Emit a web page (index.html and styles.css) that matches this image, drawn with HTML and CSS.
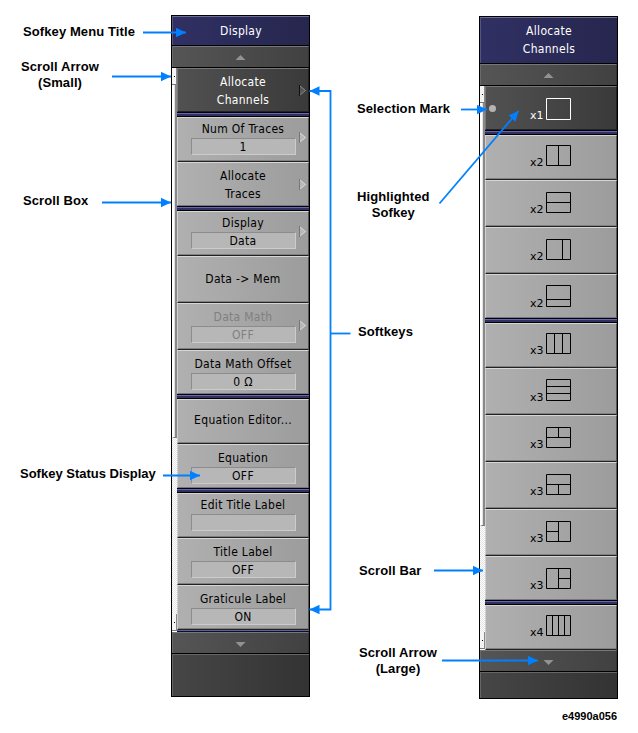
FILE: index.html
```html
<!DOCTYPE html>
<html lang="en">
<head>
  <meta charset="UTF-8">
  <meta name="viewport" content="width=device-width, initial-scale=1.0">
  <title>Softkey Menu</title>
  <link rel="stylesheet" href="styles.css">
</head>
<body>
  <div class="figure">
    <div class="labels labels-left">
      <p class="label menu-title">Sofkey Menu Title</p>
      <p class="label arrow-small">Scroll Arrow<br>(Small)</p>
      <p class="label scroll-box">Scroll Box</p>
      <p class="label status-display">Sofkey Status Display</p>
    </div>

    <!-- Display menu -->
    <div class="menu menu-display">
      <div class="title">Display</div>
      <div class="scroll"><span class="tri up"></span></div>
      <div class="content">
        <div class="bar">
          <div class="small"></div>
          <div class="thumb"></div>
          <div class="track"></div>
          <div class="small last"></div>
        </div>
        <div class="keys">
          <div class="key before dark"><span>Allocate</span><span>Channels</span><svg class="sub" width="8" height="11"><path class="fill" d="M1 1L6.5 5.5L1 10Z"/><path class="hi" d="M1 1L6.5 5.5L1 10"/><path class="lo" d="M0.5 0V11"/></svg></div>
          <div class="sep"></div>
          <div class="key after"><span>Num Of Traces</span><span class="value">1</span><svg class="sub" width="8" height="11"><path class="fill" d="M1 1L6.5 5.5L1 10Z"/><path class="hi" d="M1 1L6.5 5.5L1 10"/><path class="lo" d="M0.5 0V11"/></svg></div>
          <div class="key before"><span>Allocate</span><span>Traces</span><svg class="sub" width="8" height="11"><path class="fill" d="M1 1L6.5 5.5L1 10Z"/><path class="hi" d="M1 1L6.5 5.5L1 10"/><path class="lo" d="M0.5 0V11"/></svg></div>
          <div class="sep"></div>
          <div class="key after"><span>Display</span><span class="value">Data</span><svg class="sub" width="8" height="11"><path class="fill" d="M1 1L6.5 5.5L1 10Z"/><path class="hi" d="M1 1L6.5 5.5L1 10"/><path class="lo" d="M0.5 0V11"/></svg></div>
          <div class="key single"><span>Data -&gt; Mem</span></div>
          <div class="key disabled"><span>Data Math</span><span class="value">OFF</span><svg class="sub" width="8" height="11"><path class="fill" d="M1 1L6.5 5.5L1 10Z"/><path class="hi" d="M1 1L6.5 5.5L1 10"/><path class="lo" d="M0.5 0V11"/></svg></div>
          <div class="key before"><span>Data Math Offset</span><span class="value">0 Ω</span></div>
          <div class="sep"></div>
          <div class="key after single"><span>Equation Editor...</span></div>
          <div class="key before"><span>Equation</span><span class="value">OFF</span></div>
          <div class="sep"></div>
          <div class="key after"><span>Edit Title Label</span><span class="value"></span></div>
          <div class="key"><span>Title Label</span><span class="value">OFF</span></div>
          <div class="key end"><span>Graticule Label</span><span class="value">ON</span></div>
          <div class="end-line"></div>
        </div>
      </div>
      <div class="scroll"><span class="tri down"></span></div>
      <div class="footer"></div>
    </div>

    <div class="labels labels-mid">
      <p class="label selection">Selection Mark</p>
      <p class="label highlighted">Highlighted<br>Sofkey</p>
      <p class="label softkeys">Softkeys</p>
      <p class="label scroll-bar">Scroll Bar</p>
      <p class="label arrow-large">Scroll Arrow<br>(Large)</p>
    </div>

    <!-- Allocate Channels menu -->
    <div class="side">
      <div class="menu menu-channels">
        <div class="title">Allocate<br>Channels</div>
        <div class="scroll"><span class="tri up"></span></div>
        <div class="content">
          <div class="bar">
            <div class="small"></div>
            <div class="thumb"></div>
            <div class="track"></div>
            <div class="small last"></div>
          </div>
          <div class="keys">
            <div class="key layout before dark"><i class="mark"></i><b>x1</b><svg width="25" height="22"><path d="M.5 .5H24.5V21.5H.5Z"/></svg></div>
            <div class="sep"></div>
            <div class="key layout after"><b>x2</b><svg width="25" height="22"><path d="M.5 .5H24.5V20.5H.5ZM12.5 0V20"/></svg></div>
            <div class="key layout"><b>x2</b><svg width="25" height="22"><path d="M.5 .5H24.5V20.5H.5ZM0 10.5H24"/></svg></div>
            <div class="key layout"><b>x2</b><svg width="25" height="22"><path d="M.5 .5H24.5V20.5H.5ZM16.5 0V20"/></svg></div>
            <div class="key layout tall before"><b>x2</b><svg width="25" height="22"><path d="M.5 .5H24.5V21.5H.5ZM0 14.5H24"/></svg></div>
            <div class="sep"></div>
            <div class="key layout after"><b>x3</b><svg width="25" height="22"><path d="M.5 .5H24.5V20.5H.5ZM8.5 0V20M16.5 0V20"/></svg></div>
            <div class="key layout tall"><b>x3</b><svg width="25" height="22"><path d="M.5 .5H24.5V21.5H.5ZM0 7.5H24M0 14.5H24"/></svg></div>
            <div class="key layout"><b>x3</b><svg width="25" height="22"><path d="M.5 .5H24.5V20.5H.5ZM0 10.5H24M12.5 0V10"/></svg></div>
            <div class="key layout"><b>x3</b><svg width="25" height="22"><path d="M.5 .5H24.5V20.5H.5ZM0 10.5H24M12.5 10V20"/></svg></div>
            <div class="key layout"><b>x3</b><svg width="25" height="22"><path d="M.5 .5H24.5V20.5H.5ZM12.5 0V20M0 10.5H12"/></svg></div>
            <div class="key layout before"><b>x3</b><svg width="25" height="22"><path d="M.5 .5H24.5V20.5H.5ZM12.5 0V20M12 10.5H24"/></svg></div>
            <div class="sep"></div>
            <div class="key layout after"><b>x4</b><svg width="25" height="22"><path d="M.5 .5H24.5V20.5H.5ZM6.5 0V20M12.5 0V20M18.5 0V20"/></svg></div>
          </div>
        </div>
        <div class="scroll"><span class="tri down"></span></div>
        <div class="footer"></div>
      </div>
      <p class="figure-id">e4990a056</p>
    </div>

    <!-- Callout arrows, drawn over the menus -->
    <svg class="callouts" width="638" height="733" viewBox="0 0 638 733">
      <defs>
        <marker id="head" markerUnits="userSpaceOnUse" markerWidth="11" markerHeight="10" refX="10" refY="5" orient="auto-start-reverse">
          <path d="M0 .3L10 5L0 9.7Z"/>
        </marker>
      </defs>
      <path class="line" marker-end="url(#head)" d="M143 32.5H186"/>
      <path class="line" marker-end="url(#head)" d="M112 76.5H171"/>
      <path class="line" marker-end="url(#head)" d="M102 202.5H171"/>
      <path class="line" marker-end="url(#head)" d="M163 475.5H200"/>
      <path class="line" marker-start="url(#head)" marker-end="url(#head)" d="M309.5 91H330.5V609.5H309.5"/>
      <path class="line" d="M330.5 333.5H350.5"/>
      <path class="line" marker-end="url(#head)" d="M461 109.5H487"/>
      <path class="line" marker-end="url(#head)" d="M439.500 203.500L518.500 111"/>
      <path class="line" marker-end="url(#head)" d="M434 570.5H483"/>
      <path class="line" marker-end="url(#head)" d="M442 660.5H538"/>
    </svg>
  </div>
</body>
</html>
```

FILE: styles.css
```css
* {
  box-sizing: border-box;
}
body {
  margin: 0;
  background-color: #fff;
  overflow: hidden;
}
p {
  margin: 0;
}
.figure {
  position: relative;
  display: grid;
  grid-template-columns: 171px 139px 169px 159px;
  width: 638px;
  height: 733px;
}

/* Labels */
.label {
  width: max-content;
  font: bold 13px/16px "Liberation Sans", Arial, sans-serif;
  letter-spacing: 0.1px;
  color: #000;
  text-align: center;
}
.menu-title { margin: 24px 0 0 23px; }
.arrow-small { margin: 19px 0 0 21px; }
.scroll-box { margin: 102px 0 0 23px; }
.status-display { margin: 257px 0 0 20px; letter-spacing: 0; }
.selection { margin: 101px 0 0 47px; }
.highlighted { margin: 72px 0 0 47px; }
.softkeys { margin: 103px 0 0 48px; }
.scroll-bar { margin: 223px 0 0 49px; }
.arrow-large { margin: 66px 0 0 49px; }

/* Menus */
.menu {
  width: 139px;
  background-color: #000;
  border: 1px solid #000;
  font: 12px/18px "DejaVu Sans Condensed", "DejaVu Sans", sans-serif;
  font-stretch: condensed;
  letter-spacing: 0.3px;
  color: #000;
}
.menu-display {
  margin-top: 15px;
  height: 682px;
}
.menu-channels {
  margin-top: 16px;
  height: 683px;
}
.title {
  height: 29px;
  margin-bottom: 1px;
  padding-top: 5px;
  background: linear-gradient(to right, #303064, #26264e);
  border-top: 1px solid #6c6c94;
  border-left: 1px solid #55557f;
  color: #fff;
  text-align: center;
}
.menu-channels .title {
  height: 46px;
  padding-top: 4px;
}
.scroll {
  display: flex;
  justify-content: center;
  height: 21px;
  margin-bottom: 1px;
  padding-top: 8px;
  background: linear-gradient(to right, #555, #414141);
  border-top: 1px solid #777;
  border-left: 1px solid #6b6b6b;
  border-right: 1px solid #333;
}
.tri {
  width: 10px;
  height: 5px;
  background-color: #929292;
}
.up {
  clip-path: polygon(50% 0, 100% 100%, 0 100%);
}
.down {
  margin-top: 1px;
  clip-path: polygon(0 0, 100% 0, 50% 100%);
}
.footer {
  height: 42px;
  background: linear-gradient(to right, #464646, #333);
  border-top: 1px solid #666;
  border-left: 1px solid #666;
}
.menu-channels .footer {
  height: 26px;
}
.content {
  display: flex;
  height: 564px;
}

/* Scroll bar */
.bar {
  display: flex;
  flex-direction: column;
  width: 5px;
  padding-bottom: 1px;
  background-color: #fff;
}
.small {
  display: flex;
  align-items: center;
  height: 17px;
  background-color: #f4f4f4;
  border-right: 1px solid #888;
  border-bottom: 1px solid #777;
}
.small::before {
  content: "";
  width: 1px;
  height: 1px;
  margin-left: 2px;
  background-color: #000;
}
.thumb {
  height: 353px;
  background-color: #e2e2e2;
  border-left: 2px solid #fff;
  border-right: 2px solid #888;
  border-bottom: 1px solid #777;
}
.menu-channels .thumb {
  height: 423px;
}
.track {
  flex: 1;
  background: repeating-conic-gradient(#fff 0 25%, #e3e3e3 0 50%) 0 0 / 2px 2px;
}

/* Softkeys */
.keys {
  flex: 1;
}
.key {
  position: relative;
  display: flex;
  flex-direction: column;
  align-items: center;
  height: 47px;
  padding-top: 4px;
  background: linear-gradient(to right, #b0b0b0, #9c9c9c);
  border-top: 1px solid #d6d6d6;
  border-left: 1px solid #d0d0d0;
  border-right: 1px solid #555;
  border-bottom: 1px solid #222;
  box-shadow: inset 0 -1px #808080;
}
.key span {
  height: 18px;
  white-space: nowrap;
}
.key.before {
  height: 44px;
  border-bottom-color: #777;
  box-shadow: none;
}
.key.after {
  height: 45px;
  padding-top: 2px;
}
.key.single {
  padding-top: 13px;
}
.key.after.single {
  padding-top: 11px;
}
.key.end {
  height: 45px;
}
.key.dark {
  background: linear-gradient(to right, #515151, #3a3a3a);
  border-color: #777 #222 #222 #777;
  color: #fff;
}
.key.disabled {
  color: #808080;
}
.key .value {
  width: 105px;
  height: 17px;
  background-color: #b7b7b7;
  border: 1px solid #ccc;
  border-top-color: #8c8c8c;
  border-left-color: #8c8c8c;
  line-height: 16px;
  text-align: center;
}
.sub {
  position: absolute;
  right: 1px;
  top: 16px;
}
.after .sub {
  top: 14px;
}
.sub path {
  fill: none;
}
.sub .fill { fill: #b8b8b8; }
.sub .hi { stroke: #dcdcdc; }
.sub .lo { stroke: #777; }
.dark .sub .fill { fill: #555; }
.dark .sub .hi { stroke: #888; }
.dark .sub .lo { stroke: #111; }
.sep {
  height: 5px;
  background: linear-gradient(#000 0 1px, #6666b4 1px 2px, #303064 2px 4px, #000 4px);
}
.end-line {
  height: 2px;
  background: linear-gradient(#5c5cb0 50%, #111 50%);
}

/* Channel layout keys */
.key.layout {
  flex-direction: row;
  align-items: flex-start;
  padding: 11px 0 0 44px;
}
.key.layout.after {
  padding-top: 9px;
}
.key.layout.tall {
  padding-top: 10px;
}
.layout b {
  width: 16px;
  margin-top: 11px;
  font: 11px/14px "DejaVu Sans", sans-serif;
  letter-spacing: 0;
}
.layout.tall b {
  margin-top: 12px;
}
.layout svg path {
  fill: none;
  stroke: #000;
}
.layout.dark svg path {
  stroke: #fff;
}
.mark {
  position: absolute;
  left: 3px;
  top: 18px;
  width: 7px;
  height: 7px;
  border-radius: 50%;
  background-color: #b4b4b4;
}

.figure-id {
  width: 138px;
  margin-top: 11px;
  font: bold 11px/13px "Liberation Sans", Arial, sans-serif;
  text-align: right;
}

/* Callouts */
.callouts {
  position: absolute;
  top: 0;
  left: 0;
}
.callouts .line {
  fill: none;
  stroke: #0080ff;
  stroke-width: 1.8;
}
.callouts marker path {
  fill: #0080ff;
}
```
